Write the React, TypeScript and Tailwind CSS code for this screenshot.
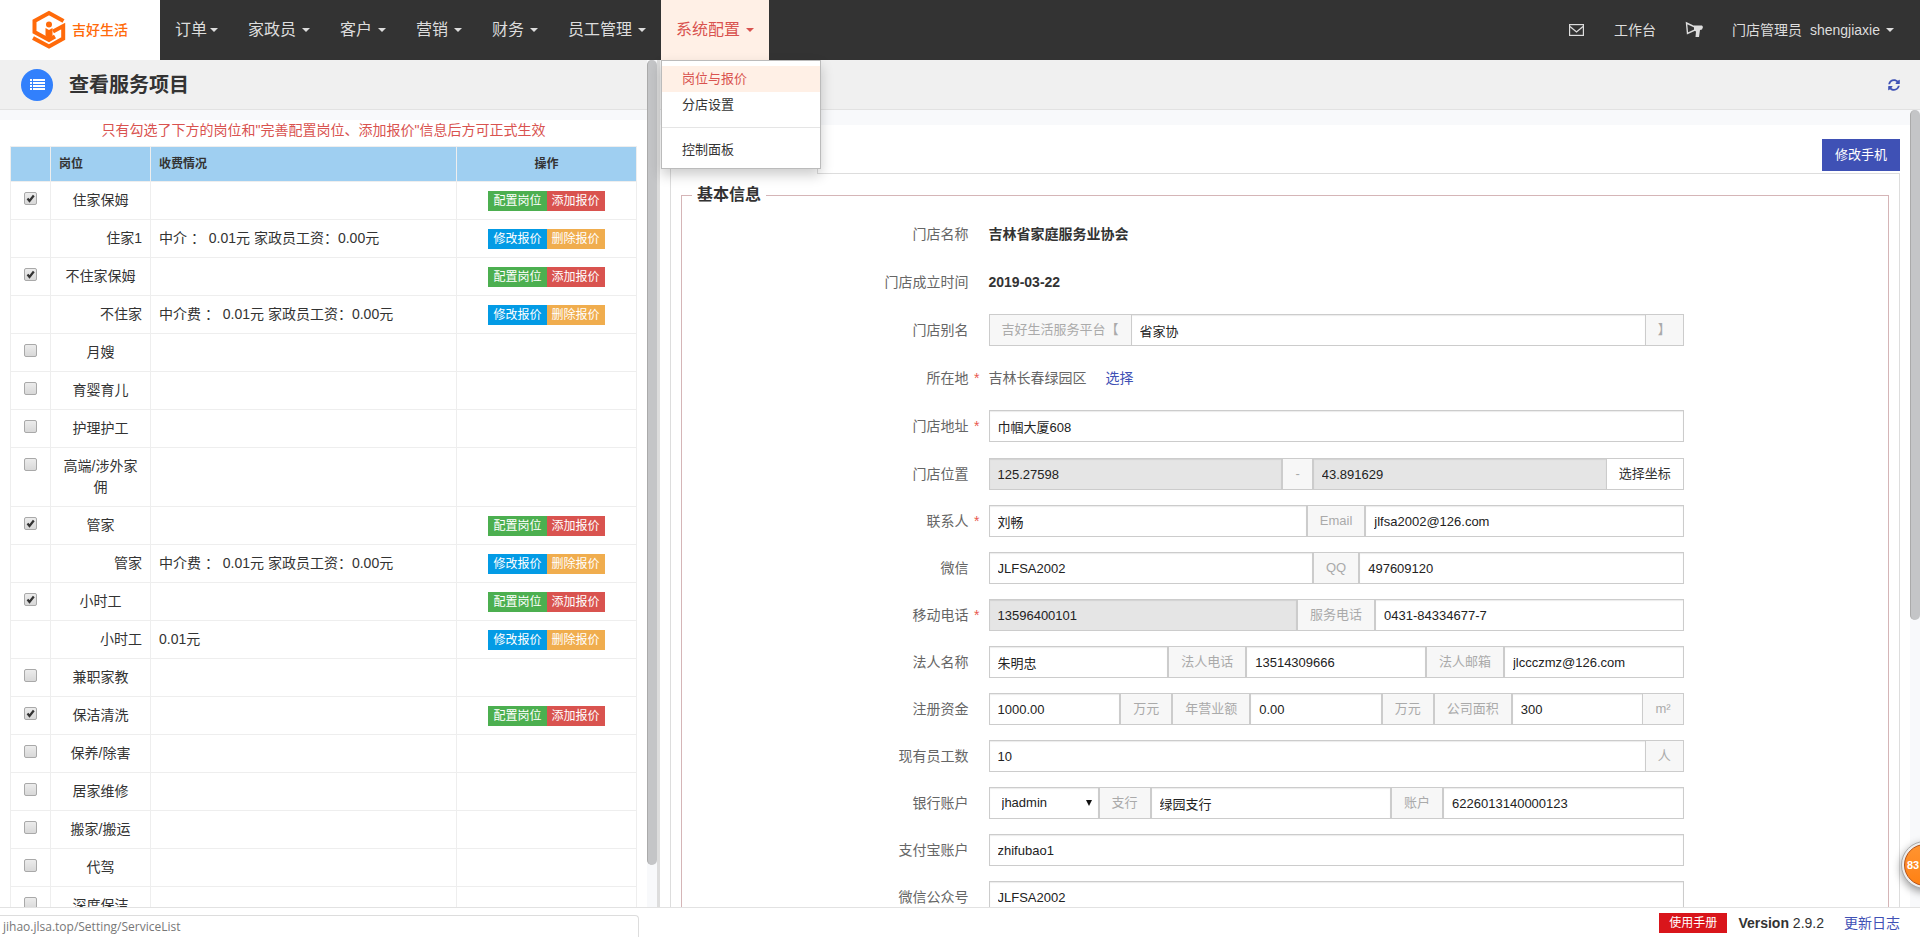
import React from "react";
import { FaSyncAlt } from "react-icons/fa";

const CJK = "font-['Liberation_Sans','Noto_Sans_CJK_SC',sans-serif]";

function Caret() {
  return (
    <span className="inline-block h-0 w-0 border-x-4 border-t-4 border-x-transparent border-t-current" />
  );
}

function Logo() {
  return (
    <svg viewBox="0 0 34 40" className="h-10 w-[34px]" fill="none">
      <path d="M31.500 11 L17 3 L2.500 11 V22 L17 30 L23 26.500" stroke="#ff6a0a" strokeWidth="4" />
      <path d="M21 21.500 L31.200 16 V28.500 L17 36.500 L1 28" stroke="#ff6a0a" strokeWidth="4" />
      <circle cx="17" cy="14.500" r="3" fill="#ff6a0a" />
      <path d="M13.500 18 L17 20 L20.500 18 V26 L17 29 L13.500 26 Z" fill="#ff6a0a" />
    </svg>
  );
}

const navItems = ["家政员", "客户", "营销", "财务", "员工管理"];

function Header() {
  return (
    <header className="relative z-20 flex h-[60px] shrink-0 bg-[#333] text-[#ddd]">
      <a href="#home" className="flex w-40 items-center gap-[6px] bg-white pl-8 text-sm font-medium text-[#ff6a0a]">
        <Logo />
        吉好生活
      </a>
      <nav className="flex text-base">
        <button className="flex items-center gap-[3px] px-[15px]">
          订单
          <Caret />
        </button>
        {navItems.map((item) => (
          <button key={item} className="flex items-center gap-[6px] px-[15px]">
            {item}
            <Caret />
          </button>
        ))}
        <div className="relative flex">
          <button className="flex items-center gap-[6px] bg-[#fff0e6] px-[15px] text-[#d9534f]">
            系统配置
            <Caret />
          </button>
          <div className="absolute top-full left-0 w-40 border border-[#bbb] bg-white py-[5px] text-[13px] leading-[26px] text-[#333] shadow-[0_6px_12px_rgba(0,0,0,0.2)]">
            <a href="#quote" className="block bg-[#fff0e6] px-5 text-[#d9534f]">
              岗位与报价
            </a>
            <a href="#branch" className="block px-5">
              分店设置
            </a>
            <hr className="my-[9px] border-[#e5e5e5]" />
            <a href="#panel" className="block px-5">
              控制面板
            </a>
          </div>
        </div>
      </nav>
      <div className="ml-auto flex items-center pr-[26px] text-sm">
        <a href="#mail" aria-label="消息" className="mr-[30px]">
          <svg viewBox="0 0 15 12" className="h-3 w-[15px]" fill="none" stroke="currentColor">
            <rect x="0.600" y="0.600" width="13.800" height="10.800" strokeWidth="1.200" />
            <path d="M1 2.500 L7.500 8 L14 2.500" strokeWidth="1.300" />
          </svg>
        </a>
        <a href="#desk" className="mr-7">
          工作台
        </a>
        <a href="#notice" aria-label="公告" className="mr-7">
          <svg viewBox="0 0 20 18" className="h-[18px] w-5" fill="none">
            <path d="M2.500 2 L11 6 V9 L3.500 12.500 Z" stroke="currentColor" strokeWidth="1.400" />
            <path d="M10 4.500 L18 4.500 L19 6 L18 8.500 L16 9 L15 16 H11.500 L12 10.500 L10 9.500 Z" fill="currentColor" />
          </svg>
        </a>
        <button className="flex items-center gap-[6px]">
          <span className="mr-[2px]">门店管理员</span>
          shengjiaxie
          <Caret />
        </button>
      </div>
    </header>
  );
}

type Service = { name: string; checked?: boolean; sub?: boolean; fee?: string };

const services: Service[] = [
  { name: "住家保姆", checked: true },
  { name: "住家1", sub: true, fee: "中介 ： 0.01元 家政员工资：0.00元" },
  { name: "不住家保姆", checked: true },
  { name: "不住家", sub: true, fee: "中介费 ： 0.01元 家政员工资：0.00元" },
  { name: "月嫂" },
  { name: "育婴育儿" },
  { name: "护理护工" },
  { name: "高端/涉外家佣" },
  { name: "管家", checked: true },
  { name: "管家", sub: true, fee: "中介费 ： 0.01元 家政员工资：0.00元" },
  { name: "小时工", checked: true },
  { name: "小时工", sub: true, fee: "0.01元" },
  { name: "兼职家教" },
  { name: "保洁清洗", checked: true },
  { name: "保养/除害" },
  { name: "居家维修" },
  { name: "搬家/搬运" },
  { name: "代驾" },
  { name: "深度保洁" },
];

function Check({ label, checked }: { label: string; checked?: boolean }) {
  return (
    <label className="relative mx-auto mt-[2px] block size-[13px]">
      <input
        type="checkbox"
        aria-label={label}
        defaultChecked={checked}
        className="peer block size-[13px] appearance-none rounded-[2px] border border-[#a9a9a9] bg-gradient-to-b from-[#ececec] to-[#d8d8d8]"
      />
      <svg
        viewBox="0 0 13 13"
        className="pointer-events-none absolute inset-0 hidden size-[13px] peer-checked:block"
        fill="none"
      >
        <path d="M3.500 6.500 L5.500 9 L9.800 3.500" stroke="#333" strokeWidth="2.200" />
      </svg>
    </label>
  );
}

function Action({ tone, children }: { tone: string; children: React.ReactNode }) {
  return <button className={"h-5 px-[5px] text-xs leading-5 text-white " + tone}>{children}</button>;
}

function ServicePanel() {
  return (
    <section className="flex w-[660px] shrink-0 border-r-[3px] border-[#ddd]">
      <div className="flex min-w-0 flex-1 flex-col overflow-hidden">
        <div className="flex h-[50px] shrink-0 items-center gap-4 border-b border-[#e2e2e2] bg-[#f0f0f0] pl-[21px]">
          <span className="flex size-8 items-center justify-center rounded-full bg-[#3280fc] text-white">
            <svg viewBox="0 0 15 12" className="h-3 w-[15px]" fill="currentColor">
              <path d="M0 0H2V2H0Z M3 0H15V2H3Z M0 3H2V5H0Z M3 3H15V5H3Z M0 6H2V8H0Z M3 6H15V8H3Z M0 9H2V11H0Z M3 9H15V11H3Z" />
            </svg>
          </span>
          <h1 className="text-xl font-bold text-[#333]">查看服务项目</h1>
        </div>
        <div className="h-[10px] shrink-0 bg-[#f8f9fb]" />
        <p className="mb-[6px] text-center text-sm leading-5 text-[#d9534f]">
          只有勾选了下方的岗位和"完善配置岗位、添加报价"信息后方可正式生效
        </p>
        <div className="px-[10px]">
          <table className="w-full table-fixed border-collapse text-sm leading-[21px] text-[#333]">
            <colgroup>
              <col className="w-10" />
              <col className="w-[100px]" />
              <col />
              <col className="w-[180px]" />
            </colgroup>
            <thead>
              <tr className="h-[35px] bg-[#9fcff1] text-xs">
                <th className="border border-[#eee]" />
                <th className="border border-[#eee] px-2 text-left font-bold">岗位</th>
                <th className="border border-[#eee] px-2 text-left font-bold">收费情况</th>
                <th className="border border-[#eee] px-2 text-center font-bold">操作</th>
              </tr>
            </thead>
            <tbody>
              {services.map((s, i) => (
                <tr key={i}>
                  <td className="border border-[#eee] py-2 align-top">
                    {!s.sub && <Check label={s.name} checked={s.checked} />}
                  </td>
                  <td className={s.sub ? "border border-[#eee] p-2 text-right" : "border border-[#eee] p-2 text-center"}>
                    {s.name}
                  </td>
                  <td className="border border-[#eee] p-2 whitespace-pre">{s.fee}</td>
                  <td className="border border-[#eee] px-2">
                    <div className="flex justify-center">
                      {s.checked && (
                        <>
                          <Action tone="bg-[#4caf50]">配置岗位</Action>
                          <Action tone="bg-[#d9534f]">添加报价</Action>
                        </>
                      )}
                      {s.sub && (
                        <>
                          <Action tone="bg-[#039be5]">修改报价</Action>
                          <Action tone="bg-[#f0ad4e]">删除报价</Action>
                        </>
                      )}
                    </div>
                  </td>
                </tr>
              ))}
            </tbody>
          </table>
        </div>
      </div>
      <div className="w-[10px] bg-[#f8f9fb]">
        <div className="h-[95%] rounded-full border-l border-[#aaa] bg-[#c4c5c7]" />
      </div>
    </section>
  );
}

function Row({
  label,
  required,
  id,
  wide,
  children,
}: {
  label: string;
  required?: boolean;
  id?: string;
  wide?: boolean;
  children: React.ReactNode;
}) {
  return (
    <div className={wide ? "mb-4 grid grid-cols-12 gap-5" : "mb-[15px] grid grid-cols-12 gap-5"}>
      <label htmlFor={id} className="relative col-span-3 text-right text-sm leading-8 text-[#666]">
        {label}
        {required && <span className="absolute -right-[11px] text-[#e9594f]">*</span>}
      </label>
      <div className="col-span-7 flex h-8 items-stretch text-[13px]">{children}</div>
    </div>
  );
}

function Field({ id, value, label, readOnly }: { id?: string; value: string; label: string; readOnly?: boolean }) {
  return (
    <input
      id={id}
      aria-label={label}
      defaultValue={value}
      readOnly={readOnly}
      className={
        "h-8 w-0 min-w-0 flex-1 border border-[#ccc] px-2 text-[#222] shadow-[inset_0_1px_1px_rgba(0,0,0,0.08)] outline-none " +
        (readOnly ? "bg-[#e5e5e5]" : "bg-white")
      }
    />
  );
}

function Addon({ side = "border", children }: { side?: string; children: React.ReactNode }) {
  return (
    <span className={"shrink-0 border-[#ccc] bg-[#f7f7f7] px-3 leading-[30px] whitespace-nowrap text-[#aaa] " + side}>
      {children}
    </span>
  );
}

function StoreForm() {
  return (
    <fieldset className="min-w-0 border border-[#d5b5b7] pb-4">
      <legend className="ml-[10px] px-[5px] text-base leading-6 font-bold text-[#333]">基本信息</legend>
      <div className="pt-[11px]">
        <Row label="门店名称" wide>
          <strong className="text-sm leading-8 text-[#333]">吉林省家庭服务业协会</strong>
        </Row>
        <Row label="门店成立时间" wide>
          <strong className="text-sm leading-8 text-[#333]">2019-03-22</strong>
        </Row>
        <Row label="门店别名" id="alias" wide>
          <Addon side="border-y border-l">吉好生活服务平台【</Addon>
          <Field id="alias" label="门店别名" value="省家协" />
          <Addon side="border-y border-r">】</Addon>
        </Row>
        <Row label="所在地" required wide>
          <span className="mr-[19px] text-sm leading-8 text-[#666]">吉林长春绿园区</span>
          <a href="#region" className="text-sm leading-8 text-[#3f51b5]">
            选择
          </a>
        </Row>
        <Row label="门店地址" id="address" required wide>
          <Field id="address" label="门店地址" value="巾帼大厦608" />
        </Row>
        <Row label="门店位置" id="lng">
          <Field id="lng" label="经度" value="125.27598" readOnly />
          <Addon>-</Addon>
          <Field label="纬度" value="43.891629" readOnly />
          <button className="border-y border-r border-[#ccc] bg-white px-3 text-[#333]">选择坐标</button>
        </Row>
        <Row label="联系人" id="contact" required>
          <Field id="contact" label="联系人" value="刘畅" />
          <Addon>Email</Addon>
          <Field label="Email" value="jlfsa2002@126.com" />
        </Row>
        <Row label="微信" id="wechat">
          <Field id="wechat" label="微信" value="JLFSA2002" />
          <Addon>QQ</Addon>
          <Field label="QQ" value="497609120" />
        </Row>
        <Row label="移动电话" id="mobile" required>
          <Field id="mobile" label="移动电话" value="13596400101" readOnly />
          <Addon>服务电话</Addon>
          <Field label="服务电话" value="0431-84334677-7" />
        </Row>
        <Row label="法人名称" id="legal">
          <Field id="legal" label="法人名称" value="朱明忠" />
          <Addon>法人电话</Addon>
          <Field label="法人电话" value="13514309666" />
          <Addon>法人邮箱</Addon>
          <Field label="法人邮箱" value="jlccczmz@126.com" />
        </Row>
        <Row label="注册资金" id="capital">
          <Field id="capital" label="注册资金" value="1000.00" />
          <Addon>万元</Addon>
          <Addon>年营业额</Addon>
          <Field label="年营业额" value="0.00" />
          <Addon>万元</Addon>
          <Addon>公司面积</Addon>
          <Field label="公司面积" value="300" />
          <Addon side="border-y border-r">m²</Addon>
        </Row>
        <Row label="现有员工数" id="staff">
          <Field id="staff" label="现有员工数" value="10" />
          <Addon side="border-y border-r">人</Addon>
        </Row>
        <Row label="银行账户" id="bank">
          <div className="relative flex w-[110px] shrink-0">
            <select
              id="bank"
              className="h-8 w-full appearance-none border border-[#ccc] bg-white pl-3 text-[#222] shadow-[inset_0_1px_1px_rgba(0,0,0,0.08)]"
            >
              <option>jhadmin</option>
            </select>
            <svg viewBox="0 0 6 6" className="pointer-events-none absolute top-[13px] right-[7px] size-[6px]">
              <path d="M0 0 H6 L3 6 Z" fill="#111" />
            </svg>
          </div>
          <Addon>支行</Addon>
          <Field label="支行" value="绿园支行" />
          <Addon>账户</Addon>
          <Field label="账户" value="6226013140000123" />
        </Row>
        <Row label="支付宝账户" id="alipay">
          <Field id="alipay" label="支付宝账户" value="zhifubao1" />
        </Row>
        <Row label="微信公众号" id="official">
          <Field id="official" label="微信公众号" value="JLFSA2002" />
        </Row>
      </div>
    </fieldset>
  );
}

function StorePanel() {
  return (
    <section className="flex min-w-0 flex-1 flex-col">
      <div className="flex h-[50px] shrink-0 items-center justify-end border-b border-[#e2e2e2] bg-[#f0f0f0] pr-5">
        <button aria-label="刷新" className="text-[#3f51b5]">
          <FaSyncAlt className="size-3" />
        </button>
      </div>
      <div className="flex min-h-0 flex-1">
        <div className="min-w-0 flex-1 overflow-hidden">
          <div className="h-[15px] bg-[#f8f9fb]" />
          <div className="px-[10px]">
            <div className="flex h-[49px] items-end">
              <div className="h-8 w-[148px] border-x border-t border-[#ddd]" />
              <div className="flex h-full flex-1 items-start justify-end border-b border-[#ddd] pt-[14px]">
                <button className="h-8 bg-[#3f51b5] px-[13px] text-[13px] text-white">修改手机</button>
              </div>
            </div>
            <div className="border-x border-[#ddd] px-[10px] pt-[9px] pb-4">
              <StoreForm />
            </div>
          </div>
        </div>
        <div className="w-[10px] shrink-0 bg-[#f8f9fb]">
          <div className="h-[64%] rounded-full border-l border-[#aaa] bg-[#c4c5c7]" />
        </div>
      </div>
    </section>
  );
}

export default function App() {
  return (
    <div className={"relative flex h-screen flex-col overflow-hidden bg-white " + CJK}>
      <Header />
      <main className="flex min-h-0 flex-1">
        <ServicePanel />
        <StorePanel />
      </main>
      <footer className="flex h-[30px] shrink-0 items-center justify-end border-t border-[#e2e2e2] pr-5 text-sm text-[#333]">
        <div className="mt-[7px] mr-auto h-[22px] w-[639px] rounded-tr border-t border-r border-[#ddd] pl-[3px] font-['Open_Sans',sans-serif] text-xs leading-[22px] text-[#777]">
          jihao.jlsa.top/Setting/ServiceList
        </div>
        <a href="#manual" className="mr-[11px] h-5 bg-[#d9151b] px-[10px] text-xs leading-5 text-white">
          使用手册
        </a>
        <span>
          <b>Version</b> 2.9.2
        </span>
        <a href="#changelog" className="ml-5 text-[#3f51b5]">
          更新日志
        </a>
      </footer>
      <div className="absolute -right-[29px] bottom-12 z-30 size-12 rounded-full border border-[#aaa] bg-[#eee] p-[2px] shadow-[0_3px_8px_rgba(0,0,0,0.4)]">
        <div className="size-full rounded-full border border-[#b5531a] bg-gradient-to-b from-[#ff9430] to-[#ff8010] pl-[2px] text-[11px] leading-10 font-bold text-white">
          83
        </div>
      </div>
    </div>
  );
}
